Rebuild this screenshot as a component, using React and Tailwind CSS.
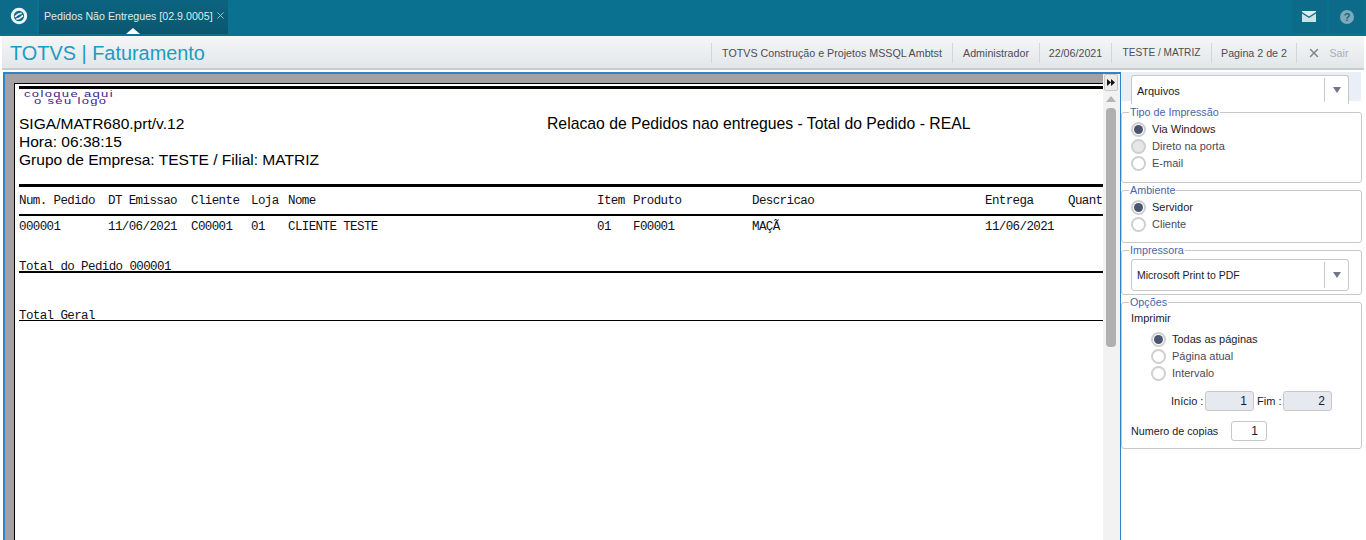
import React from 'react';
import { X } from 'lucide-react';

const sans = 'font-["Liberation_Sans",Arial,sans-serif]';
const mono = 'font-["Liberation_Mono","Courier_New",monospace]';

function Radio({ label, checked, disabled }) {
  return (
    <div className="flex items-center h-[17px]">
      <span className={`w-[15px] h-[15px] rounded-full border-2 border-[#cfcfcf] flex items-center justify-center ${disabled ? 'bg-[#e6e6e6]' : 'bg-white'}`}>
        {checked && <span className="w-[9px] h-[9px] rounded-full bg-[#4a5570]" />}
      </span>
      <span className={`ml-[6px] text-[11px] ${checked ? 'text-[#1a1a2a]' : 'text-[#4a4a58]'}`}>{label}</span>
    </div>
  );
}

function Group({ title, className, children }) {
  return (
    <div className={`relative mr-[4px] border border-[#c8c8c8] rounded-[3px] bg-white ${className}`}>
      <span className="absolute left-[7px] top-[-7px] bg-white px-[1px] text-[10.75px] leading-[13px] text-[#4a66a8]">{title}</span>
      {children}
    </div>
  );
}

function Combo({ label, className, labelClass }) {
  return (
    <div className={`flex items-center bg-white border border-[#c8c8c8] rounded-[3px] ${className}`}>
      <span className={`flex-1 pl-[5px] text-[#1a1a2a] ${labelClass}`}>{label}</span>
      <span className="w-[1px] self-stretch my-[2px] bg-[#c8c8c8]" />
      <span className="w-[23px] flex justify-center">
        <span className="w-0 h-0 border-l-[4px] border-r-[4px] border-t-[6px] border-l-transparent border-r-transparent border-t-[#6f7684]" />
      </span>
    </div>
  );
}

function Rule({ h, mt }) {
  return <div className={`bg-black ${h} ${mt}`} />;
}

function ToolItem({ children, w, size = 'text-[10.7px]' }) {
  return <div className={`h-[20px] flex items-center justify-center border-r border-[#d3d6d9] text-[#4c4c55] ${size} ${w}`}>{children}</div>;
}

export default function App() {
  return (
    <div className={`w-[1366px] h-[540px] overflow-hidden flex flex-col bg-white ${sans}`}>
      {/* top bar */}
      <div className="h-[36px] bg-[#0b7190] flex shrink-0">
        <div className="w-[37px] h-[34px] pb-[2px] bg-[#0c6b88] flex items-center justify-center">
          <svg width="18" height="18" viewBox="0 0 20 20">
            <circle cx="10" cy="10" r="7.4" fill="none" stroke="#eef5f7" strokeWidth="3.4" />
            <path d="M5.5 11 C8 9 8 7.5 13 7 M7 13.5 C12 13 12 11 14.5 9.5" fill="none" stroke="#eef5f7" strokeWidth="1.8" />
          </svg>
        </div>
        <div className="relative ml-[2px] w-[189px] h-[34px] bg-gradient-to-b from-[#0b6580] to-[#0a566e] flex items-center pl-[5px] text-[10.65px] text-[#dfeaee]">
          Pedidos Não Entregues [02.9.0005]
          <X size={11} className="ml-[2px] mb-[3px] text-[#a9c6d0]" strokeWidth={2} />
          <span className="absolute left-[87px] bottom-0 w-0 h-0 border-l-[7px] border-r-[7px] border-b-[6px] border-l-transparent border-r-transparent border-b-white" />
        </div>
        <div className="flex-1" />
        <div className="w-[36px] h-[33px] bg-[#0c6b88] flex items-center justify-center">
          <svg width="14" height="11" viewBox="0 0 14 11">
            <path d="M0 1 L7 5.5 L14 1 L14 0 L0 0 Z" fill="#e0ebef" />
            <path d="M0 2.4 L7 7 L14 2.4 L14 11 L0 11 Z" fill="#cfe0e6" />
          </svg>
        </div>
        <div className="ml-[2px] mr-[1px] w-[36px] h-[33px] bg-[#0c6b88] flex items-center justify-center">
          <span className="w-[14px] h-[14px] rounded-full bg-[#7fa9b8] text-[#0c6b88] text-[11px] font-bold leading-[14px] text-center">?</span>
        </div>
      </div>

      {/* title bar */}
      <div className="h-[34px] shrink-0 mx-[2px] border-t-2 border-[#f4f6f7] border-b-2 border-b-[#c9ccd0] bg-gradient-to-b from-[#f3f5f6] to-[#e4e7ea] flex items-center">
        <div className="pl-[8px] pt-[2px] text-[19.9px] text-[#1b9cc0] whitespace-nowrap">TOTVS | Faturamento</div>
        <div className="flex-1" />
        <div className="flex items-center">
          <div className="w-[1px] h-[20px] bg-[#d3d6d9]" />
          <ToolItem w="w-[241px]">TOTVS Construção e Projetos MSSQL Ambtst</ToolItem>
          <ToolItem w="w-[87px]">Administrador</ToolItem>
          <ToolItem w="w-[72px]">22/06/2021</ToolItem>
          <ToolItem w="w-[100px]" size="text-[10.1px]">TESTE / MATRIZ</ToolItem>
          <ToolItem w="w-[85px]">Pagina 2 de 2</ToolItem>
          <div className="w-[67px] pr-[5px] flex items-center justify-center text-[10.7px] text-[#a9adb3]">
            <X size={14} className="mr-[8px] text-[#7c8088]" strokeWidth={2.5} />
            Sair
          </div>
        </div>
      </div>

      {/* main */}
      <div className="flex-1 flex min-h-0">
        {/* preview */}
        <div className="w-[1118px] ml-[3px] mt-[2px] border-l-[2px] border-t-[2px] border-r-[1px] border-[#2b84cc] flex min-h-0 bg-[#f2f2f2]">
          <div className="w-[1098px] overflow-hidden bg-[#a3a1a6] pl-[9px] pt-[9px]">
            <div className="h-[500px] border-l border-t border-black bg-white pl-[4px] pt-[2px] text-black">
              <Rule h="h-[3px]" />
              <div className="pl-[5px] h-[26px] pt-[3px] text-[13px] text-[#3a1a90] tracking-[1.35px] whitespace-pre">
                <div className="h-[6px] leading-[6px] scale-y-[0.7] origin-top-left">coloque aqui</div>
                <div className="h-[7px] leading-[7px] scale-y-[0.7] origin-top-left">  o seu logo</div>
              </div>
              <div className="text-[15.55px] leading-[18px] whitespace-nowrap flex">
                <span className="w-[528px]">SIGA/MATR680.prt/v.12</span>
                <span className="text-[15.75px]">Relacao de Pedidos nao entregues - Total do Pedido - REAL</span>
              </div>
              <div className="text-[15.55px] leading-[18px]">Hora: 06:38:15</div>
              <div className="text-[15.55px] leading-[18px]">Grupo de Empresa: TESTE / Filial: MATRIZ</div>
              <Rule h="h-[3px]" mt="mt-[15px]" />
              <div className={`${mono} flex h-[27px] pt-[2px] items-center text-[12.5px] whitespace-nowrap tracking-[-0.6px] text-[#101018]`}>
                <span className="w-[89px]">Num. Pedido</span>
                <span className="w-[83px]">DT Emissao</span>
                <span className="w-[60px]">Cliente</span>
                <span className="w-[37px]">Loja</span>
                <span className="w-[309px]">Nome</span>
                <span className="w-[36px]">Item</span>
                <span className="w-[119px]">Produto</span>
                <span className="w-[233px]">Descricao</span>
                <span className="w-[83px]">Entrega</span>
                <span>Quant</span>
              </div>
              <Rule h="h-[2px]" />
              <div className={`${mono} flex h-[21px] pt-[2px] items-center text-[12.5px] whitespace-nowrap tracking-[-0.6px] text-[#101018]`}>
                <span className="w-[89px]">000001</span>
                <span className="w-[83px]">11/06/2021</span>
                <span className="w-[60px]">C00001</span>
                <span className="w-[37px]">01</span>
                <span className="w-[309px]">CLIENTE TESTE</span>
                <span className="w-[36px]">01</span>
                <span className="w-[119px]">F00001</span>
                <span className="w-[233px]">MAÇÃ</span>
                <span>11/06/2021</span>
              </div>
              <div className={`${mono} mt-[22px] h-[12px] leading-[16px] text-[12.5px] tracking-[-0.6px] text-[#101018]`}>Total do Pedido 000001</div>
              <Rule h="h-[2px]" />
              <div className={`${mono} mt-[35px] h-[12px] leading-[16px] text-[12.5px] tracking-[-0.6px] text-[#101018]`}>Total Geral</div>
              <Rule h="h-[1px]" />
            </div>
          </div>
          {/* scrollbar column */}
          <div className="w-[17px] pl-[1px] pr-[2px] flex flex-col items-center">
            <div className="w-[14px] h-[17px] bg-[#ebebeb] border border-[#c8c8c8] rounded-[2px] flex items-center justify-center">
              <svg width="8" height="7" viewBox="0 0 8 7">
                <path d="M0 0 L4 3.5 L0 7 Z M4 0 L8 3.5 L4 7 Z" fill="#111" />
              </svg>
            </div>
            <div className="mt-[5px] w-0 h-0 border-l-[5px] border-r-[5px] border-b-[6px] border-l-transparent border-r-transparent border-b-[#b5b5b5]" />
            <div className="mt-[6px] w-[10px] h-[239px] rounded-[4px] bg-[#b0b0b0]" />
          </div>
        </div>

        {/* side panel */}
        <div className="flex-1 flex flex-col bg-white">
          <div className="h-[29px] bg-[#e9eff6] mt-[2px] mr-[5px] pl-[10px] shrink-0">
            <Combo label="Arquivos" labelClass="text-[11px] pt-[2px]" className="relative h-[29px] w-[218px] top-[3px] rounded-b-none border-b-0" />
          </div>
          <Group title="Tipo de Impressão" className="h-[71px] mt-[11px] pl-[9px] pt-[8px]">
            <Radio label="Via Windows" checked />
            <Radio label="Direto na porta" disabled />
            <Radio label="E-mail" />
          </Group>
          <Group title="Ambiente" className="h-[53px] mt-[7px] pl-[9px] pt-[8px]">
            <Radio label="Servidor" checked />
            <Radio label="Cliente" />
          </Group>
          <Group title="Impressora" className="h-[45px] mt-[7px] pl-[9px] pt-[8px]">
            <Combo label="Microsoft Print to PDF" labelClass="text-[10.5px] pt-[1px]" className="h-[32px] w-[218px]" />
          </Group>
          <Group title="Opções" className="h-[147px] mt-[7px] pl-[9px] pt-[9px]">
            <div className="text-[11px] leading-[13px] text-[#1a1a2a]">Imprimir</div>
            <div className="ml-[20px] mt-[6px]">
              <Radio label="Todas as páginas" checked />
              <Radio label="Página atual" />
              <Radio label="Intervalo" />
            </div>
            <div className="flex items-center ml-[40px] mt-[9px] text-[11px] text-[#1a1a2a]">
              <span className="w-[34px] whitespace-nowrap">Início :</span>
              <span className="w-[49px] h-[20px] bg-[#e6e9f0] border border-[#c8c8c8] rounded-[3px] text-right pr-[6px] text-[12px] leading-[19px]">1</span>
              <span className="w-[29px] pl-[3px] whitespace-nowrap">Fim :</span>
              <span className="w-[49px] h-[20px] bg-[#e6e9f0] border border-[#c8c8c8] rounded-[3px] text-right pr-[6px] text-[12px] leading-[19px]">2</span>
            </div>
            <div className="flex items-center mt-[10px] text-[10.75px] text-[#1a1a2a]">
              <span className="w-[100px] whitespace-nowrap">Numero de copias</span>
              <span className="w-[36px] h-[20px] border border-[#c8c8c8] rounded-[3px] text-right pr-[8px] text-[12px] leading-[19px]">1</span>
            </div>
          </Group>
        </div>
      </div>
    </div>
  );
}
